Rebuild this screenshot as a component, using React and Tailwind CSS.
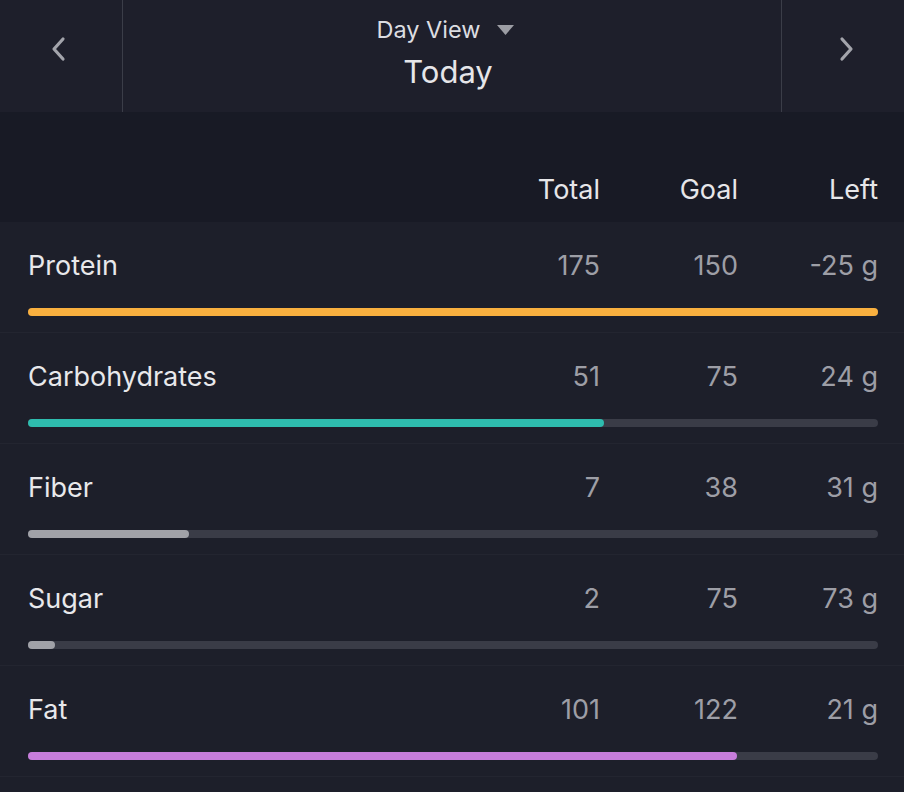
import React from "react";

const rows = [
  { name: "Protein", total: "175", goal: "150", left: "-25 g", fill: 850, color: "bg-[#f9b03f]" },
  { name: "Carbohydrates", total: "51", goal: "75", left: "24 g", fill: 576, color: "bg-[#2ebcae]" },
  { name: "Fiber", total: "7", goal: "38", left: "31 g", fill: 161, color: "bg-[#a1a2a8]" },
  { name: "Sugar", total: "2", goal: "75", left: "73 g", fill: 27, color: "bg-[#a1a2a8]" },
  { name: "Fat", total: "101", goal: "122", left: "21 g", fill: 709, color: "bg-[#c77ddb]" },
];

function Chevron({ dir }) {
  return (
    <svg width="18" height="26" viewBox="0 0 18 26" fill="none">
      {dir === "left" ? (
        <path d="M13 3 L4 13 L13 23" stroke="#a3a4ab" strokeWidth="3.2" strokeLinecap="round" strokeLinejoin="round" />
      ) : (
        <path d="M5 3 L14 13 L5 23" stroke="#a3a4ab" strokeWidth="3.2" strokeLinecap="round" strokeLinejoin="round" />
      )}
    </svg>
  );
}

export default function App() {
  return (
    <div
      className="w-[904px] h-[792px] bg-[#1d1f2a] overflow-hidden"
      style={{ fontFamily: "Inter, 'Noto Sans', sans-serif" }}
    >
      <div className="h-[112px] flex bg-[#1e1f2b]">
        <div className="w-[123px] border-r border-[#3b3d48] flex items-center justify-center pr-[4px] pb-[14px]">
          <Chevron dir="left" />
        </div>
        <div className="flex-1 flex flex-col items-center pt-[14px]">
          <div className="flex items-center gap-[16px] pr-[14px]">
            <span className="text-[23.5px] leading-[32px] text-[#dcdde1]">Day View</span>
            <svg width="17" height="10" viewBox="0 0 17 10">
              <path d="M0 0 H17 L8.5 10 Z" fill="#9c9da4" />
            </svg>
          </div>
          <div className="text-[31px] leading-[40px] text-[#e6e6e9] mt-[6px] -ml-[8px]">Today</div>
        </div>
        <div className="w-[123px] border-l border-[#3b3d48] flex items-center justify-center pl-[6px] pb-[14px]">
          <Chevron dir="right" />
        </div>
      </div>

      <div className="h-[110px] bg-[#181a25] flex items-end pl-[28px] pr-[26px] pb-[16px]">
        <div className="flex-1" />
        <div className="w-[140px] text-right text-[27px] leading-[32px] text-[#e6e6e9]">Total</div>
        <div className="w-[138px] text-right text-[27px] leading-[32px] text-[#e6e6e9]">Goal</div>
        <div className="w-[140px] text-right text-[27px] leading-[32px] text-[#e6e6e9]">Left</div>
      </div>

      {rows.map((r) => (
        <div key={r.name} className="h-[111px] border-b border-[#232530] pl-[28px] pr-[26px] pt-[28px]">
          <div className="flex text-[27px] leading-[32px]">
            <div className="flex-1 text-[#e8e8eb]">{r.name}</div>
            <div className="w-[140px] text-right text-[#9d9ea6]">{r.total}</div>
            <div className="w-[138px] text-right text-[#9d9ea6]">{r.goal}</div>
            <div className="w-[140px] text-right text-[#9d9ea6]">{r.left}</div>
          </div>
          <div className="mt-[26px] h-[8px] rounded-full bg-[#3a3c47] relative">
            <div className={`h-[8px] rounded-full ${r.color}`} style={{ width: r.fill }} />
          </div>
        </div>
      ))}
    </div>
  );
}
